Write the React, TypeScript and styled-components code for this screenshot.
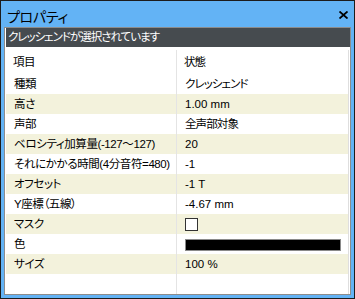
import styled, { createGlobalStyle } from "styled-components";

const GlobalStyle = createGlobalStyle`
  html, body {
    margin: 0;
    padding: 0;
    background: #ffffff;
  }
  body {
    font-family: "Liberation Sans", "Noto Sans CJK JP", sans-serif;
    font-feature-settings: "palt" 1;
  }
`;

const Window = styled.div`
  width: 355px;
  height: 299px;
  box-sizing: border-box;
  border: 1px solid #1c1c1c;
  background: #63b3f5;
  padding: 0 3px 3px 3px;
  display: flex;
  flex-direction: column;
`;

const TitleBar = styled.div`
  height: 26px;
  display: flex;
  align-items: center;
  justify-content: space-between;
  padding: 0 3px 0 3px;
`;

const Title = styled.div`
  font-family: "Noto Sans CJK JP", sans-serif;
  font-size: 14px;
  letter-spacing: -0.3px;
  color: #000;
  padding-top: 4px;
`;

const CloseButton = styled.div`
  display: flex;
  align-items: center;
  padding-top: 1px;
`;

const Panel = styled.div`
  flex: 1;
  border: 1px solid #8c8c8c;
  background: #fff;
  display: flex;
  flex-direction: column;
  min-height: 0;
`;

const Selection = styled.div`
  height: 19px;
  line-height: 19px;
  background: #464b4f;
  color: #fff;
  font-size: 11.5px;
  letter-spacing: -1px;
  padding-left: 2px;
  border: 1px solid #fff;
  border-top: none;
  border-right: none;
  white-space: nowrap;
  overflow: hidden;
`;

const Table = styled.div`
  flex: 1;
  display: flex;
  flex-direction: column;
  margin: 2px 1px 0 1px;
  border-right: 1px solid #dedede;
  font-size: 11.5px;
  color: #000;
`;

const Jp = styled.span`
  letter-spacing: -0.9px;
`;

const HeaderRow = styled.div`
  display: grid;
  grid-template-columns: 171px 1fr;
  height: 24px;
  line-height: 24px;
`;

const DataRow = styled.div<{ $alt: boolean }>`
  display: grid;
  grid-template-columns: 171px 1fr;
  height: 20px;
  line-height: 20px;
  background: ${(p) => (p.$alt ? "#f3f2dc" : "#fff")};
`;

const Filler = styled.div`
  flex: 1;
  display: grid;
  grid-template-columns: 171px 1fr;
`;

const LabelCell = styled.div<{ $header?: boolean }>`
  padding-left: ${(p) => (p.$header ? "7px" : "8px")};
  border-right: 1px solid #e4e4e4;
  letter-spacing: -0.4px;
  white-space: nowrap;
  overflow: hidden;
`;

const ValueCell = styled.div<{ $header?: boolean }>`
  padding-left: ${(p) => (p.$header ? "7px" : "8px")};
  padding-right: 7px;
  display: flex;
  align-items: center;
  white-space: nowrap;
`;

const Box = styled.div`
  width: 11px;
  height: 11px;
  border: 1px solid #333;
  background: #fff;
`;

const Swatch = styled.div`
  flex: 1;
  height: 10px;
  background: #000;
  border: 1px solid #8a8a8a;
  margin-top: 1px;
`;

type Row = { label: string; value: React.ReactNode };

function getRows(): Row[] {
  return [
    { label: "種類", value: <Jp>クレッシェンド</Jp> },
    { label: "高さ", value: "1.00 mm" },
    { label: "声部", value: <Jp>全声部対象</Jp> },
    { label: "ベロシティ加算量(-127〜127)", value: "20" },
    { label: "それにかかる時間(4分音符=480)", value: "-1" },
    { label: "オフセット", value: "-1 T" },
    { label: "Y座標（五線）", value: "-4.67 mm" },
    { label: "マスク", value: <Box /> },
    { label: "色", value: <Swatch /> },
    { label: "サイズ", value: "100 %" },
  ];
}

export default function App() {
  const rows = getRows();
  return (
    <>
      <GlobalStyle />
      <Window>
        <TitleBar>
          <Title>プロパティ</Title>
          <CloseButton aria-label="close">
            <svg width="9" height="8" viewBox="0 0 9 8">
              <path d="M0.5 0.5 L8.5 7.5 M8.5 0.5 L0.5 7.5" stroke="#000" strokeWidth="1.8" />
            </svg>
          </CloseButton>
        </TitleBar>
        <Panel>
          <Selection>クレッシェンドが選択されています</Selection>
          <Table>
            <HeaderRow>
              <LabelCell $header>項目</LabelCell>
              <ValueCell $header>
                <Jp>状態</Jp>
              </ValueCell>
            </HeaderRow>
            {rows.map((r, i) => (
              <DataRow key={r.label} $alt={i % 2 === 1}>
                <LabelCell>{r.label}</LabelCell>
                <ValueCell>{r.value}</ValueCell>
              </DataRow>
            ))}
            <Filler>
              <LabelCell />
              <ValueCell />
            </Filler>
          </Table>
        </Panel>
      </Window>
    </>
  );
}
